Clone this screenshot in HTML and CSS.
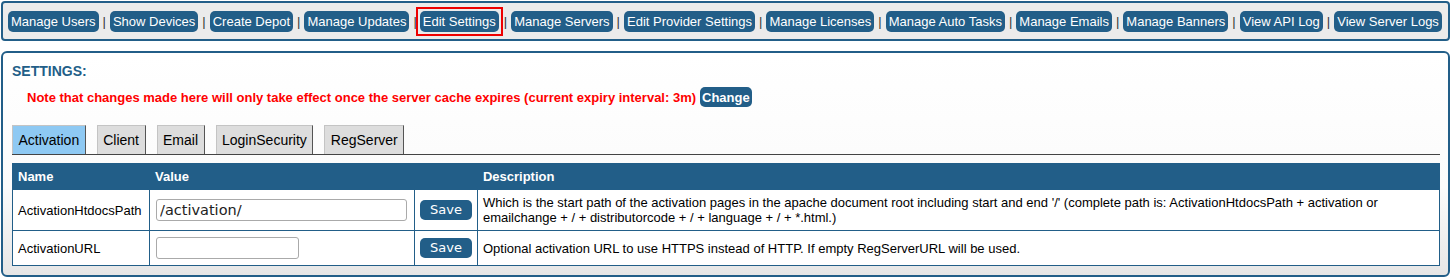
FILE: index.html
```html
<!DOCTYPE html>
<html lang="en">
<head>
  <meta charset="UTF-8">
  <meta name="viewport" content="width=device-width, initial-scale=1.0">
  <title>Settings</title>
  <link rel="stylesheet" href="styles.css">
</head>
<body>
  <div class="nav">
    <a class="nav-btn" href="#">Manage Users</a><span class="sep">|</span>
    <a class="nav-btn" href="#">Show Devices</a><span class="sep">|</span>
    <a class="nav-btn" href="#">Create Depot</a><span class="sep">|</span>
    <a class="nav-btn" href="#">Manage Updates</a><span class="sep">|</span>
    <span class="current"><a class="nav-btn" href="#">Edit Settings</a></span><span class="sep">|</span>
    <a class="nav-btn" href="#">Manage Servers</a><span class="sep">|</span>
    <a class="nav-btn" href="#">Edit Provider Settings</a><span class="sep">|</span>
    <a class="nav-btn" href="#">Manage Licenses</a><span class="sep">|</span>
    <a class="nav-btn" href="#">Manage Auto Tasks</a><span class="sep">|</span>
    <a class="nav-btn" href="#">Manage Emails</a><span class="sep">|</span>
    <a class="nav-btn" href="#">Manage Banners</a><span class="sep">|</span>
    <a class="nav-btn" href="#">View API Log</a><span class="sep">|</span>
    <a class="nav-btn" href="#">View Server Logs</a>
  </div>

  <div class="panel">
    <h2 class="title">SETTINGS:</h2>
    <div class="note">
      <span>Note that changes made here will only take effect once the server cache expires (current expiry interval: 3m)</span>
      <button class="change-btn">Change</button>
    </div>

    <ul class="tabs">
      <li class="tab active">Activation</li>
      <li class="tab">Client</li>
      <li class="tab">Email</li>
      <li class="tab">LoginSecurity</li>
      <li class="tab">RegServer</li>
    </ul>

    <table class="settings">
      <thead>
        <tr>
          <th class="col-name">Name</th>
          <th class="col-value">Value</th>
          <th class="col-save"></th>
          <th>Description</th>
        </tr>
      </thead>
      <tbody>
        <tr>
          <td>ActivationHtdocsPath</td>
          <td><input class="field wide" type="text" value="/activation/"></td>
          <td><button class="save-btn">Save</button></td>
          <td>Which is the start path of the activation pages in the apache document root including start and end '/' (complete path is: ActivationHtdocsPath + activation or emailchange + / + distributorcode + / + language + / + *.html.)</td>
        </tr>
        <tr>
          <td>ActivationURL</td>
          <td><input class="field" type="text" value=""></td>
          <td><button class="save-btn">Save</button></td>
          <td>Optional activation URL to use HTTPS instead of HTTP. If empty RegServerURL will be used.</td>
        </tr>
      </tbody>
    </table>
  </div>
</body>
</html>
```

FILE: styles.css
```css
body {
  margin: 1px;
  font-family: 'Liberation Sans', Arial, sans-serif;
  font-size: 13px;
  color: #000;
  background: #fff;
}
.nav {
  display: flex;
  align-items: center;
  gap: 4px;
  background: #ebebeb;
  border: 2px solid #225e88;
  border-radius: 4px;
  padding: 8px 5px 7px;
}
.nav-btn {
  display: block;
  background: #225e88;
  color: #fff;
  text-decoration: none;
  line-height: 15px;
  padding: 3px 3px;
  border-radius: 5px;
}
.current {
  display: block;
  border: 2px solid #ee0000;
  padding: 2px;
  margin: -4px -3px -4px -5px;
}
.sep {
  color: #333;
  line-height: 15px;
}
.panel {
  margin-top: 10px;
  border: 2px solid #225e88;
  border-radius: 6px;
  padding: 10px 8px 9px 9px;
  background: linear-gradient(#ffffff, #fbfbfb 60%, #e6e6e6);
}
.title {
  margin: 0;
  font-size: 14px;
  line-height: 16px;
  color: #225e88;
}
.note {
  display: flex;
  align-items: center;
  gap: 4px;
  margin-top: 8px;
  padding-left: 15px;
  color: #ff0000;
  font-weight: bold;
}
.change-btn {
  font-family: 'Liberation Sans', Arial, sans-serif;
  font-size: 13px;
  font-weight: bold;
  line-height: 15px;
  color: #fff;
  background: #225e88;
  border: none;
  border-radius: 5px;
  padding: 3px 2px 2px;
}
.tabs {
  display: flex;
  gap: 11px;
  list-style: none;
  margin: 18px 0 0;
  padding: 0;
  border-bottom: 1px solid #444;
}
.tab {
  font-size: 14px;
  line-height: 16px;
  padding: 6px 5.5px;
  background: #dddddd;
  border: 1px solid #555;
  border-top-color: #c4c4c4;
  border-left-color: #c4c4c4;
  border-bottom: none;
}
.tab.active {
  background: #8ec9f3;
}
.settings {
  width: 100%;
  margin-top: 8px;
  border-collapse: collapse;
  background: #fff;
}
.settings th {
  background: #225e88;
  color: #fff;
  text-align: left;
  font-weight: bold;
  line-height: 15px;
  padding: 5px;
  border: 1px solid #225e88;
}
.settings td {
  line-height: 15px;
  padding: 5px;
  border: 1px solid #225e88;
  vertical-align: middle;
}
.col-name {
  width: 126px;
}
.col-value {
  width: 254px;
}
.col-save {
  width: 51px;
}
.field {
  display: block;
  box-sizing: border-box;
  width: 143px;
  height: 22px;
  margin: 1px 0 1px 1px;
  padding: 0 3px;
  font-family: 'DejaVu Sans', sans-serif;
  font-size: 14.5px;
  color: #222;
  border: 1px solid #aaa;
  border-radius: 3px;
  background: #fff;
}
.field.wide {
  width: 251px;
}
.save-btn {
  display: block;
  font-family: 'DejaVu Sans', sans-serif;
  font-size: 13px;
  line-height: 16px;
  color: #fff;
  background: #225e88;
  border: none;
  border-radius: 5px;
  padding: 2px 10px;
}
```
